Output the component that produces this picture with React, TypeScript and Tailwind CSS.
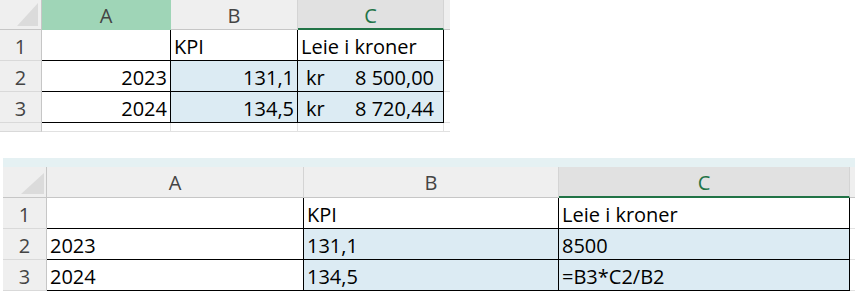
import type { ReactNode } from 'react'

type Align = 'left' | 'right'

// column header letter cell
function ColHead({ children, tone = 'plain' }: { children?: ReactNode; tone?: 'plain' | 'picked' | 'active' }) {
  if (tone === 'picked') {
    return (
      <div className="flex items-center justify-center border-b border-r border-[#9fd5b7] bg-[#9fd5b7] pt-[1px] leading-[27px] text-[#444]">
        {children}
      </div>
    )
  }
  if (tone === 'active') {
    return (
      <div className="flex items-center justify-center border-r border-b-2 border-r-[#d4d4d4] border-b-[#217346] bg-[#e1e1e1] pt-[2px] leading-[27px] text-[#217346]">
        {children}
      </div>
    )
  }
  return (
    <div className="flex items-center justify-center border-r border-b border-r-[#d4d4d4] border-b-[#c6c6c6] bg-[#efefef] pt-[1px] leading-[27px] text-[#444]">
      {children}
    </div>
  )
}

// top-left select-all corner with its little triangle
function Corner({ big }: { big?: boolean }) {
  return (
    <div
      className={`flex items-end justify-end border-r border-b border-[#c6c6c6] bg-[#efefef] ${
        big ? 'pr-[2px] pb-[3px]' : 'pr-[3px] pb-[3px]'
      }`}
    >
      {big ? (
        <svg width="23" height="21" viewBox="0 0 23 21">
          <polygon points="23,0 23,21 0,21" fill="#dbdbdb" />
        </svg>
      ) : (
        <svg width="21" height="23" viewBox="0 0 21 23">
          <polygon points="21,0 21,23 0,23" fill="#dbdbdb" />
        </svg>
      )}
    </div>
  )
}

function RowHead({ n }: { n: number }) {
  return (
    <div className="overflow-hidden border-r border-b border-r-[#c6c6c6] border-b-[#d9d9d9] bg-[#efefef] pt-[3px] text-center leading-[27px] text-[#444]">
      {n}
    </div>
  )
}

// a cell inside the bordered table
function Cell({ children, align = 'left', fill }: { children?: ReactNode; align?: Align; fill?: boolean }) {
  return (
    <div
      className={`overflow-hidden whitespace-nowrap border-r border-b border-black pt-[3px] leading-[27px] ${
        align === 'right' ? 'pr-[3px] text-right' : 'pl-[3px]'
      } ${fill ? 'bg-[#dcebf3]' : 'bg-white'}`}
    >
      {children}
    </div>
  )
}

// accounting format: currency left, amount right
function Money({ value }: { value: string }) {
  return (
    <div className="flex justify-between overflow-hidden whitespace-nowrap border-r border-b border-black bg-[#dcebf3] pt-[3px] pl-[8px] pr-[9px] leading-[27px]">
      <span>kr</span>
      <span>{value}</span>
    </div>
  )
}

function Blank({ edge }: { edge?: boolean }) {
  return <div className={`border-b border-[#e1e1e1] ${edge ? '' : 'border-r'}`} />
}

function TopSheet() {
  return (
    <div className="grid h-[132px] w-[450px] grid-cols-[42px_129px_127px_146px_6px] grid-rows-[30px_31px_31px_31px_9px] overflow-hidden">
      <Corner />
      <ColHead tone="picked">A</ColHead>
      <ColHead>B</ColHead>
      <ColHead tone="active">C</ColHead>
      <div className="border-b border-[#c6c6c6] bg-[#efefef]" />

      <RowHead n={1} />
      <Cell />
      <Cell>KPI</Cell>
      <Cell>Leie i kroner</Cell>
      <Blank edge />

      <RowHead n={2} />
      <Cell align="right">2023</Cell>
      <Cell align="right" fill>131,1</Cell>
      <Money value="8 500,00" />
      <Blank edge />

      <RowHead n={3} />
      <Cell align="right">2024</Cell>
      <Cell align="right" fill>134,5</Cell>
      <Money value="8 720,44" />
      <Blank edge />

      <RowHead n={4} />
      <Blank />
      <Blank />
      <Blank />
      <Blank edge />
    </div>
  )
}

function BottomSheet() {
  return (
    <div className="mt-[26px] flex flex-col pl-[3px]">
      <div className="h-[9px] bg-[#e5f1f3]" />
      <div className="grid w-[852px] grid-cols-[44px_257px_255px_291px_5px] grid-rows-[31px_31px_31px_31px]">
        <Corner big />
        <ColHead>A</ColHead>
        <ColHead>B</ColHead>
        <ColHead tone="active">C</ColHead>
        <div className="border-b border-[#c6c6c6] bg-[#efefef]" />

        <RowHead n={1} />
        <Cell />
        <Cell>KPI</Cell>
        <Cell>Leie i kroner</Cell>
        <Blank edge />

        <RowHead n={2} />
        <Cell>2023</Cell>
        <Cell fill>131,1</Cell>
        <Cell fill>8500</Cell>
        <Blank edge />

        <RowHead n={3} />
        <Cell>2024</Cell>
        <Cell fill>134,5</Cell>
        <Cell fill>=B3*C2/B2</Cell>
        <Blank edge />
      </div>
    </div>
  )
}

export default function App() {
  return (
    <div className="flex h-[295px] w-[855px] flex-col overflow-hidden bg-white font-['Open_Sans',sans-serif] text-[20px] text-black">
      <TopSheet />
      <BottomSheet />
    </div>
  )
}
